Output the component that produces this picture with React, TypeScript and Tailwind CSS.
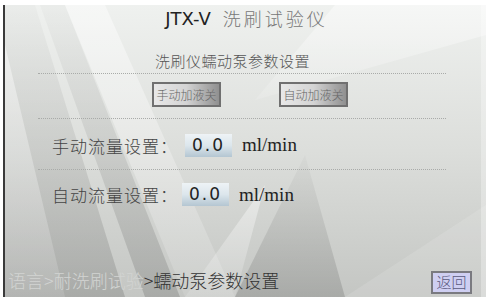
const cjk = { fontFamily: '"Noto Sans CJK SC", sans-serif' };

const Dotted = () => (
  <div className="ml-[33px] w-[408px] border-t border-dotted border-[#a9aba9]" />
);

const ValueBox = ({ value }: { value: string }) => (
  <div className="flex h-[23px] w-[47px] items-center justify-center bg-gradient-to-b from-[#eef3f6] via-[#dce6ec] to-[#b4c6d2] font-['DejaVu_Sans',sans-serif] text-[17px] tracking-[2px] text-[#222]">
    {value}
  </div>
);

const FlowRow = ({ label, value, boxGap }: { label: string; value: string; boxGap: string }) => (
  <div className="flex items-center pl-[47px]">
    <span className="text-[17px] font-light tracking-[1px] text-[#444]" style={cjk}>
      {label}
    </span>
    <div className={boxGap}>
      <ValueBox value={value} />
    </div>
    <span className="ml-[10px] font-['Liberation_Serif',serif] text-[19px] text-[#222]">ml/min</span>
  </div>
);

const PumpButton = ({ text }: { text: string }) => (
  <div
    className="flex h-[25px] w-[69px] items-center justify-center border-2 border-[#707070] bg-gradient-to-r from-[#e8e8e8] via-[#d4d4d4] to-[#909090] text-[12px] font-light text-[#666]"
    style={cjk}
  >
    {text}
  </div>
);

export default function App() {
  return (
    <div className="h-[297px] w-[489px] overflow-hidden bg-white pl-[3px] pt-[5px]">
      <div className="relative h-[292px] w-[483px] overflow-hidden border-l-2 border-[#3a3a3a] bg-gradient-to-b from-[#eff1ef] via-[#dcdedb] to-[#c4c6c3]">
        {/* background beams */}
        <svg className="absolute inset-0" width="481" height="292" viewBox="0 0 481 292">
          <defs>
            <linearGradient id="dark" x1="0" y1="0" x2="0" y2="1">
              <stop offset="0" stopColor="#000" stopOpacity="0.02" />
              <stop offset="1" stopColor="#000" stopOpacity="0.14" />
            </linearGradient>
            <linearGradient id="light" x1="0" y1="0" x2="0" y2="1">
              <stop offset="0" stopColor="#fff" stopOpacity="0.45" />
              <stop offset="1" stopColor="#fff" stopOpacity="0.12" />
            </linearGradient>
          </defs>
          <polygon points="0,0 30,0 120,292 0,292" fill="url(#dark)" />
          <polygon points="35,0 60,0 175,292 140,292" fill="url(#dark)" />
          <polygon points="0,40 0,292 60,292" fill="url(#light)" />
          <polygon points="60,0 100,0 230,292 180,292" fill="url(#light)" />
          <polygon points="250,95 330,0 481,0 481,30" fill="url(#light)" />
          <polygon points="230,292 300,150 340,292" fill="url(#dark)" />
          <polygon points="180,292 260,180 230,292" fill="url(#light)" />
          <polygon points="340,292 481,200 481,292" fill="#fff" fillOpacity="0.12" />
          <rect x="476" y="0" width="5" height="292" fill="#fff" fillOpacity="0.3" />
        </svg>

        <div className="relative flex h-full flex-col">
          <div className="mt-[2px] flex h-[22px] items-center justify-center pl-[2px]">
            <span className="font-['DejaVu_Sans',sans-serif] text-[18px] text-[#222]">JTX-V</span>
            <span className="ml-[12px] text-[18px] font-light tracking-[3px] text-[#777]" style={cjk}>
              洗刷试验仪
            </span>
          </div>

          <div className="mt-[23px] flex h-[18px] items-center justify-center pr-[26px]">
            <span className="text-[15px] font-light tracking-[0.5px] text-[#555]" style={cjk}>
              洗刷仪蠕动泵参数设置
            </span>
          </div>

          <div className="mt-[3px]">
            <Dotted />
          </div>

          <div className="mt-[8px] flex pl-[147px]">
            <PumpButton text="手动加液关" />
            <div className="ml-[58px]">
              <PumpButton text="自动加液关" />
            </div>
          </div>

          <div className="mt-[11px]">
            <Dotted />
          </div>

          <div className="mt-[12px]">
            <FlowRow label="手动流量设置：" value="0.0" boxGap="ml-[7px]" />
          </div>

          <div className="mt-[9px]">
            <Dotted />
          </div>

          <div className="mt-[11px]">
            <FlowRow label="自动流量设置：" value="0.0" boxGap="ml-[4px]" />
          </div>

          <div className="mt-auto mb-[3px] flex items-end justify-between pl-[3px] pr-[14px]">
            <div className="text-[18px] font-light" style={cjk}>
              <span className="text-[#d2d4d2]">语言&gt;耐洗刷试验</span>
              <span className="text-[#333]">&gt;蠕动泵参数设置</span>
            </div>
            <div
              className="flex h-[23px] w-[41px] items-center justify-center border-2 border-[#7a7a80] bg-[#cfcff2] text-[15px] font-light text-[#5a5a80]"
              style={cjk}
            >
              返回
            </div>
          </div>
        </div>
      </div>
    </div>
  );
}
